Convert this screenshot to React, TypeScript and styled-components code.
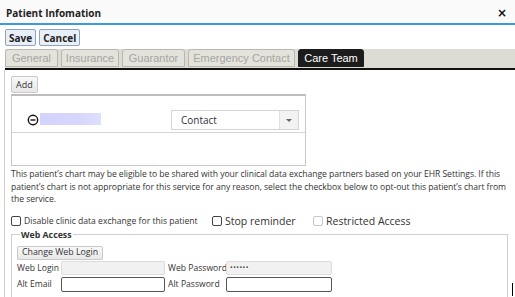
import React from "react";
import styled, { createGlobalStyle } from "styled-components";

const Global = createGlobalStyle`
  html, body { margin: 0; padding: 0; background: #fff; }
  body { font-family: "Open Sans", "Noto Sans", sans-serif; color: #222; overflow: hidden; }
  * { box-sizing: border-box; }
`;

const Page = styled.div`
  width: 515px;
  height: 297px;
  position: relative;
  overflow: hidden;
`;

const Header = styled.div`
  height: 25px;
  display: flex;
  align-items: center;
  justify-content: space-between;
  padding: 2px 8px 0 6px;
  background: #fafafa;
  border-bottom: 2px solid #3b9ae1;
`;

const Title = styled.span`
  font-weight: 700;
  font-size: 10px;
  color: #222;
`;

const Close = styled.span`
  font-family: "DejaVu Sans", sans-serif;
  font-weight: 700;
  font-size: 12px;
  color: #111;
`;

const Toolbar = styled.div`
  display: flex;
  gap: 3px;
  padding: 4px 5px 3px 5px;
`;

const ToolButton = styled.button`
  height: 17px;
  padding: 0 3px;
  font-family: "Open Sans", sans-serif;
  font-weight: 700;
  font-size: 10px;
  color: #222;
  background: #e9eff6;
  border: 1px solid #8fa3bb;
  border-radius: 2px;
  line-height: 1;
`;

const TabBar = styled.div`
  margin-left: 5px;
  display: flex;
  align-items: flex-end;
  gap: 3px;
  height: 21px;
  background: #dddcd4;
  border-bottom: 2px solid #111;
`;

const Tab = styled.div<{ $active?: boolean; $w: number }>`
  flex: none;
  width: ${(p) => p.$w}px;
  height: 18px;
  margin-bottom: 1px;
  display: flex;
  align-items: center;
  justify-content: center;
  white-space: nowrap;
  font-family: "Liberation Sans", Arial, sans-serif;
  font-size: 11px;
  color: ${(p) => (p.$active ? "#fff" : "#a6a6a2")};
  background: ${(p) => (p.$active ? "#1c1c1c" : "#e3e2db")};
  border: 1px solid ${(p) => (p.$active ? "#1c1c1c" : "#b9b8b0")};
  border-radius: 3px 3px 0 0;
`;

const Content = styled.div`
  margin-left: 4px;
  border-left: 1px solid #cfcfcf;
  padding: 6px 0 0 6px;
  height: 240px;
`;

const SmallButton = styled.button`
  display: block;
  height: 17px;
  padding: 0 4px;
  font-family: "Open Sans", sans-serif;
  font-size: 9px;
  color: #333;
  background: linear-gradient(#f8f8f8, #e8e8e8);
  border: 1px solid #c9c9c9;
  border-radius: 2px;
  line-height: 1;
`;

const TeamBox = styled.div`
  width: 295px;
  height: 72px;
  margin-top: 1px;
  border: 1px solid #c8c8c8;
  border-top: 2px solid #bdbdbd;
`;

const TeamRow = styled.div`
  height: 37px;
  display: flex;
  align-items: center;
  padding: 12px 6px 0 15px;
  border-bottom: 1px solid #d6d6d6;
`;

const RemoveIcon = styled.svg`
  width: 12px;
  height: 12px;
  flex: none;
`;

const NameBlur = styled.div`
  width: 61px;
  height: 12px;
  margin-left: 1px;
  margin-top: -3px;
  background: linear-gradient(90deg, #d2d2fd 0%, #d6d6fd 60%, #dedefe 100%);
`;

const Select = styled.div`
  margin-left: auto;
  width: 128px;
  height: 20px;
  display: flex;
  align-items: center;
  border: 1px solid #d4d4d4;
  font-family: "Open Sans", sans-serif;
  font-size: 10px;
  color: #333;
`;

const SelectText = styled.span`
  flex: 1;
  padding-left: 9px;
`;

const SelectArrow = styled.div`
  width: 19px;
  height: 100%;
  border-left: 1px solid #e0e0e0;
  background: #f3f3f3;
  display: flex;
  align-items: center;
  justify-content: center;
  &::after {
    content: "";
    border-left: 3px solid transparent;
    border-right: 3px solid transparent;
    border-top: 3px solid #666;
  }
`;

const Notice = styled.p`
  margin: 2px 0 0 0;
  width: 500px;
  font-family: "Open Sans", sans-serif;
  font-size: 8.6px;
  line-height: 12.5px;
  color: #333;
  letter-spacing: -0.05px;
`;

const CheckRow = styled.div`
  display: flex;
  align-items: center;
  height: 16px;
  margin-top: 7px;
`;

const Check = styled.label<{ $big?: boolean; $w: number }>`
  flex: none;
  width: ${(p) => p.$w}px;
  display: flex;
  align-items: center;
  gap: 3px;
  font-family: "Open Sans", sans-serif;
  font-size: ${(p) => (p.$big ? "10.5px" : "8.6px")};
  color: #333;
  white-space: nowrap;
`;

const Box = styled.span<{ $disabled?: boolean }>`
  width: 10px;
  height: 10px;
  border: 1px solid ${(p) => (p.$disabled ? "#c8c8c8" : "#444")};
  border-radius: 2px;
  background: #fff;
  flex: none;
`;

const Fieldset = styled.fieldset`
  margin: 0;
  width: 497px;
  padding: 5px 0 0 5px;
  border: 1px solid #cfcfcf;
  border-bottom: none;
  height: 70px;
`;

const Legend = styled.legend`
  padding: 0 1px;
  margin-left: 3px;
  font-family: "Open Sans", sans-serif;
  font-weight: 700;
  font-size: 8.8px;
  line-height: 12px;
  color: #333;
`;

const WebLoginButton = styled(SmallButton)`
  height: 14px;
  font-size: 8.8px;
`;

const FieldGrid = styled.div`
  display: grid;
  grid-template-columns: 44px 104px 61px 106px;
  row-gap: 2px;
  margin-top: 1px;
  align-items: center;
`;

const FieldLabel = styled.span<{ $indent?: boolean }>`
  padding-left: ${(p) => (p.$indent ? "3px" : "0")};
  font-family: "Open Sans", sans-serif;
  font-size: 8.6px;
  line-height: 12px;
  color: #333;
  white-space: nowrap;
`;

const Input = styled.div<{ $disabled?: boolean }>`
  height: ${(p) => (p.$disabled ? "14px" : "15px")};
  border: 1px solid ${(p) => (p.$disabled ? "#dcdcdc" : "#555")};
  background: ${(p) => (p.$disabled ? "#f1f1f1" : "#fff")};
  border-radius: 2px;
  font-size: 7px;
  line-height: 12px;
  padding-left: 3px;
  color: #444;
  letter-spacing: 0.5px;
`;

const Cursor = styled.div`
  position: absolute;
  left: 512px;
  top: 283px;
  width: 1px;
  height: 13px;
  background: #000;
`;

const tabs: [string, number][] = [
  ["General", 53],
  ["Insurance", 58],
  ["Guarantor", 63],
  ["Emergency Contact", 107],
];

export default function App() {
  return (
    <Page>
      <Global />
      <Header>
        <Title>Patient Infomation</Title>
        <Close>×</Close>
      </Header>
      <Toolbar>
        <ToolButton>Save</ToolButton>
        <ToolButton>Cancel</ToolButton>
      </Toolbar>
      <TabBar>
        {tabs.map(([t, w]) => (
          <Tab key={t} $w={w}>
            {t}
          </Tab>
        ))}
        <Tab $active $w={66}>
          Care Team
        </Tab>
      </TabBar>
      <Content>
        <SmallButton>Add</SmallButton>
        <TeamBox>
          <TeamRow>
            <RemoveIcon viewBox="0 0 12 12">
              <circle cx="6" cy="6" r="4.7" fill="none" stroke="#111" strokeWidth="1.4" />
              <line x1="3.5" y1="6" x2="8.5" y2="6" stroke="#111" strokeWidth="1.4" />
            </RemoveIcon>
            <NameBlur />
            <Select>
              <SelectText>Contact</SelectText>
              <SelectArrow />
            </Select>
          </TeamRow>
        </TeamBox>
        <Notice>
          This patient’s chart may be eligible to be shared with your clinical data exchange partners based on your EHR Settings. If this
          patient’s chart is not appropriate for this service for any reason, select the checkbox below to opt-out this patient’s chart from
          the service.
        </Notice>
        <CheckRow>
          <Check $w={201}>
            <Box />
            Disable clinic data exchange for this patient
          </Check>
          <Check $big $w={101}>
            <Box />
            Stop reminder
          </Check>
          <Check $big $w={100}>
            <Box $disabled />
            Restricted Access
          </Check>
        </CheckRow>
        <Fieldset>
          <Legend>Web Access</Legend>
          <WebLoginButton>Change Web Login</WebLoginButton>
          <FieldGrid>
            <FieldLabel>Web Login</FieldLabel>
            <Input $disabled />
            <FieldLabel $indent>Web Password</FieldLabel>
            <Input $disabled>••••••</Input>
            <FieldLabel>Alt Email</FieldLabel>
            <Input />
            <FieldLabel $indent>Alt Password</FieldLabel>
            <Input />
          </FieldGrid>
        </Fieldset>
      </Content>
      <Cursor />
    </Page>
  );
}
